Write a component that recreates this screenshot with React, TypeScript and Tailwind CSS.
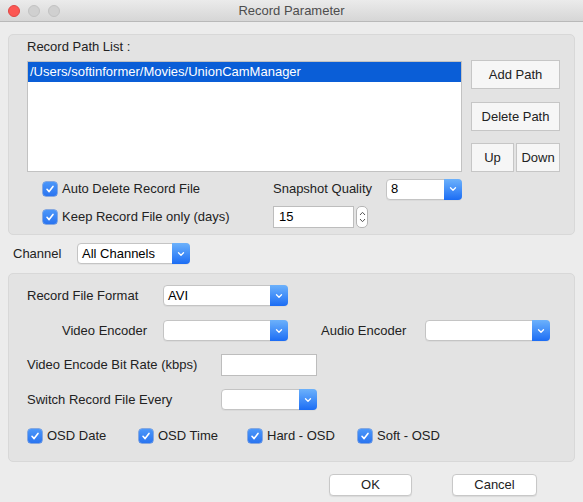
import type { ReactNode } from "react";

const font = { fontFamily: '"Liberation Sans", Arial, sans-serif' };

function Check({ label }: { label: string }) {
    return (
        <div className="flex items-center gap-[5px]">
            <span className="w-[14px] h-[14px] rounded-[3px] bg-gradient-to-b from-[#4c97f9] to-[#2a74f0] flex items-center justify-center shadow-[0_0_0_0.5px_#2b6fdc]">
                <svg width="10" height="10" viewBox="0 0 10 10">
                    <path d="M2 5.3 L4.1 7.6 L8 2.4" fill="none" stroke="#fff" strokeWidth="1.6" strokeLinecap="round" strokeLinejoin="round" />
                </svg>
            </span>
            <span className="text-[13px] text-[#222]">{label}</span>
        </div>
    );
}

function Select({ value, w }: { value?: string; w: string }) {
    return (
        <div className={`${w} h-[21px] flex bg-white border border-[#c4c4c4] rounded-[4px] shadow-[0_1px_0_rgba(0,0,0,0.04)]`}>
            <div className="flex-1 flex items-center pl-[4px] text-[13px] text-black">{value}</div>
            <div className="w-[18px] -my-px -mr-px rounded-r-[4px] bg-gradient-to-b from-[#6cb1fb] to-[#1b6cf4] flex items-center justify-center">
                <svg width="8" height="6" viewBox="0 0 8 6">
                    <path d="M1.5 1.8 L4 4.2 L6.5 1.8" fill="none" stroke="#fff" strokeWidth="1.3" strokeLinecap="round" strokeLinejoin="round" />
                </svg>
            </div>
        </div>
    );
}

function TextBox({ value, w }: { value?: string; w: string }) {
    return (
        <div className={`${w} h-[22px] bg-white border border-[#bdbdbd] flex items-center pl-[5px] text-[13px] text-black`}>
            {value}
        </div>
    );
}

function Btn({ children, w }: { children: ReactNode; w: string }) {
    return (
        <div className={`${w} h-[29px] bg-[#f6f6f6] border border-[#c6c6c6] flex items-center justify-center text-[13px] text-[#222]`}>
            {children}
        </div>
    );
}

function Group({ children, className }: { children: ReactNode; className: string }) {
    return (
        <div className={`bg-[#e3e3e3] border border-[#d8d8d8] rounded-[5px] ${className}`}>{children}</div>
    );
}

export default function App() {
    return (
        <div className="w-[583px] h-[502px] bg-[#ececec] overflow-hidden" style={font}>
            <div className="h-[22px] bg-gradient-to-b from-[#ebebeb] to-[#d6d6d6] border-b border-[#b9b9b9] flex items-center relative">
                <div className="flex gap-[8px] pl-[8px]">
                    <span className="w-[12px] h-[12px] rounded-full bg-[#fc5753] border border-[#df4744]" />
                    <span className="w-[12px] h-[12px] rounded-full bg-[#d0d0d0] border border-[#c2c2c2]" />
                    <span className="w-[12px] h-[12px] rounded-full bg-[#d0d0d0] border border-[#c2c2c2]" />
                </div>
                <div className="absolute inset-0 flex items-center justify-center text-[13px] text-[#4d4d4d]">
                    Record Parameter
                </div>
            </div>

            <div className="px-[8px]">
                <Group className="mt-[12px] pl-[18px] pt-[4px] pb-[6px]">
                    <div className="h-[16px] leading-[16px] text-[13px] text-[#222]">Record Path List :</div>
                    <div className="flex mt-[5px]">
                        <div className="w-[435px] h-[111px] mt-[1px] bg-white border border-[#c2c2c2]">
                            <div className="h-[20px] bg-[#0a5ed7] text-white text-[13px] flex items-center pl-[2px]">
                                /Users/softinformer/Movies/UnionCamManager
                            </div>
                        </div>
                        <div className="ml-[9px] flex flex-col">
                            <Btn w="w-[89px]">Add Path</Btn>
                            <div className="mt-[13px]">
                                <Btn w="w-[89px]">Delete Path</Btn>
                            </div>
                            <div className="mt-[12px] flex gap-[2px]">
                                <Btn w="w-[43px]">Up</Btn>
                                <Btn w="w-[44px]">Down</Btn>
                            </div>
                        </div>
                    </div>
                    <div className="flex items-center h-[22px] mt-[6px]">
                        <div className="w-[246px] pl-[16px]">
                            <Check label="Auto Delete Record File" />
                        </div>
                        <span className="w-[113px] text-[13px] text-[#222]">Snapshot Quality</span>
                        <Select value="8" w="w-[76px]" />
                    </div>
                    <div className="flex items-center h-[22px] mt-[6px]">
                        <div className="w-[246px] pl-[16px]">
                            <Check label="Keep Record File only (days)" />
                        </div>
                        <TextBox value="15" w="w-[81px]" />
                        <div className="ml-[2px] w-[12px] h-[22px] bg-white border border-[#b5b5b5] rounded-[5px] flex flex-col items-center justify-center gap-[2px]">
                            <svg width="7" height="5" viewBox="0 0 7 5">
                                <path d="M1 4 L3.5 1.3 L6 4" fill="none" stroke="#555" strokeWidth="1" />
                            </svg>
                            <svg width="7" height="5" viewBox="0 0 7 5">
                                <path d="M1 1 L3.5 3.7 L6 1" fill="none" stroke="#555" strokeWidth="1" />
                            </svg>
                        </div>
                    </div>
                </Group>

                <div className="flex items-center h-[21px] mt-[8px] pl-[5px]">
                    <span className="w-[64px] text-[13px] text-[#222]">Channel</span>
                    <Select value="All Channels" w="w-[113px]" />
                </div>

                <Group className="mt-[9px] pl-[18px] pt-[11px] pb-[15px]">
                    <div className="flex items-center h-[21px]">
                        <span className="w-[136px] text-[13px] text-[#222]">Record File Format</span>
                        <Select value="AVI" w="w-[125px]" />
                    </div>
                    <div className="flex items-center h-[21px] mt-[14px]">
                        <span className="w-[136px] pl-[35px] text-[13px] text-[#222]">Video Encoder</span>
                        <Select w="w-[125px]" />
                        <span className="ml-[33px] w-[104px] text-[13px] text-[#222]">Audio Encoder</span>
                        <Select w="w-[125px]" />
                    </div>
                    <div className="flex items-center h-[22px] mt-[13px]">
                        <span className="w-[194px] text-[13px] text-[#222]">Video Encode Bit Rate (kbps)</span>
                        <TextBox w="w-[96px]" />
                    </div>
                    <div className="flex items-center h-[21px] mt-[13px]">
                        <span className="w-[194px] text-[13px] text-[#222]">Switch Record File Every</span>
                        <Select w="w-[96px]" />
                    </div>
                    <div className="flex items-center h-[20px] mt-[16px] pl-[1px]">
                        <div className="w-[111px]">
                            <Check label="OSD Date" />
                        </div>
                        <div className="w-[109px]">
                            <Check label="OSD Time" />
                        </div>
                        <div className="w-[110px]">
                            <Check label="Hard - OSD" />
                        </div>
                        <Check label="Soft - OSD" />
                    </div>
                </Group>

                <div className="flex justify-end gap-[40px] pr-[38px] mt-[12px]">
                    <div className="w-[83px] h-[22px] bg-white border border-[#c8c8c8] rounded-[4px] shadow-[0_1px_1px_rgba(0,0,0,0.08)] flex items-center justify-center text-[13px] text-[#222]">
                        OK
                    </div>
                    <div className="w-[85px] h-[22px] bg-white border border-[#c8c8c8] rounded-[4px] shadow-[0_1px_1px_rgba(0,0,0,0.08)] flex items-center justify-center text-[13px] text-[#222]">
                        Cancel
                    </div>
                </div>
            </div>
        </div>
    );
}
